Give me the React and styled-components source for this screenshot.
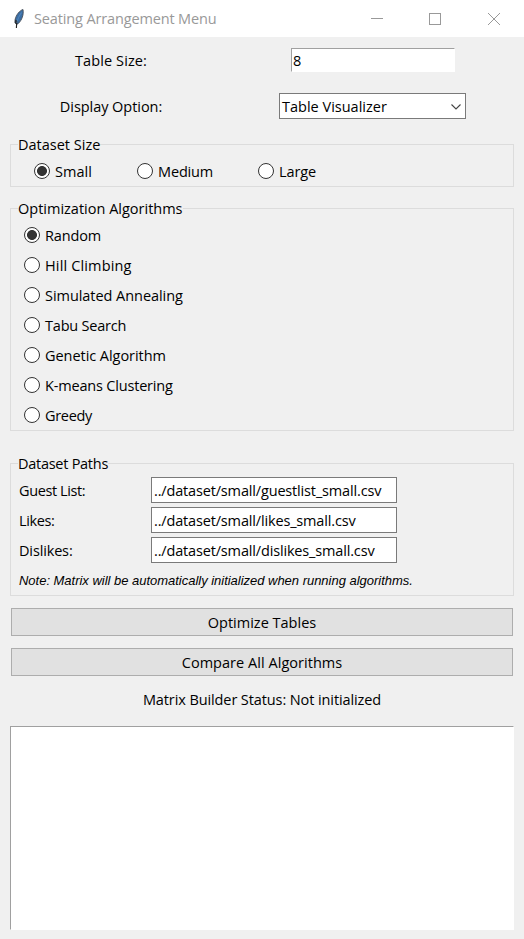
import React, { useState } from "react";
import styled, { createGlobalStyle } from "styled-components";

const GlobalStyle = createGlobalStyle`
  *, *::before, *::after { box-sizing: border-box; }
  body { margin: 0; background: #f0f0f0; }
`;

const Window = styled.main`
  display: flex;
  flex-direction: column;
  width: 524px;
  height: 939px;
  background: #f0f0f0;
  color: #000;
  font: 14.5px/20px "Open Sans", "Noto Sans", sans-serif;
`;

const TitleBar = styled.header`
  display: flex;
  align-items: center;
  flex: none;
  height: 37px;
  padding: 0 23px 0 10px;
  background: #fff;
  color: #999;
`;

const Title = styled.h1`
  flex: 1;
  margin: 0 0 0 6px;
  font: inherit;
  letter-spacing: -0.14px;
`;

const WindowControls = styled.div`
  display: grid;
  grid-template-columns: 58px 59px 14px;
`;

const ControlButton = styled.button`
  display: flex;
  padding: 0;
  border: 0;
  background: none;
  color: #999;
`;

const Text = styled.span`
  white-space: pre;
  letter-spacing: ${(p) => p.$track || 0}px;
`;

const FieldLabel = styled(Text)`
  padding-top: 2px;
`;

const Form = styled.div`
  display: flex;
  flex-direction: column;
  flex: 1;
  padding: 10px 10px 9px;
`;

const FieldRow = styled.div`
  display: grid;
  grid-template-columns: 222px 301px;
  align-items: center;
  justify-items: center;
  height: 26px;
  margin: 0 -10px ${(p) => p.$after}px;
`;

const SunkenInput = styled.input`
  width: 164px;
  height: 24px;
  margin-left: 1px;
  padding: 0 1px;
  border: 1px solid #fff;
  border-top-color: #a0a0a0;
  border-left-color: #a0a0a0;
  outline: 0;
  background: #fff;
  font: inherit;
`;

const Combobox = styled.button`
  display: flex;
  align-items: center;
  justify-content: space-between;
  width: 187px;
  height: 26px;
  padding: 1px 4px 0 2px;
  border: 1px solid #7a7a7a;
  background: #fff;
  color: #000;
  font: inherit;
`;

const Group = styled.section`
  height: ${(p) => p.$height}px;
  margin-bottom: ${(p) => p.$after}px;
  padding: 0 8px;
  border: 1px solid #dcdcdc;
`;

const Legend = styled.h2`
  width: fit-content;
  height: 20px;
  margin: -10px 0 0 -1px;
  font: inherit;
  background: #f0f0f0;
  letter-spacing: ${(p) => p.$track || 0}px;
`;

const RadioRow = styled.div`
  display: flex;
  gap: 45px;
  padding: 7px 0 0 15px;
`;

const RadioColumn = styled.div`
  display: flex;
  flex-direction: column;
  gap: 10px;
  padding: 7px 0 0 5px;
`;

const RadioLabel = styled.label`
  display: flex;
  align-items: center;
  gap: 5px;
  height: 20px;
  width: ${(p) => (p.$width ? `${p.$width}px` : "auto")};
`;

const RadioInput = styled.input`
  appearance: none;
  flex: none;
  width: 16px;
  height: 16px;
  margin: 0 0 2px;
  border: 1px solid #333;
  border-radius: 50%;
  background: #fff;
  &:checked {
    background: radial-gradient(circle, #333 4.6px, #fff 5.3px);
  }
`;

const PathGrid = styled.div`
  display: grid;
  grid-template-columns: 132px 246px;
  grid-auto-rows: 26px;
  row-gap: 4px;
  align-items: center;
  padding-top: 3px;
`;

const PathInput = styled.input`
  width: 246px;
  height: 26px;
  padding: 1px 2px 0;
  border: 1px solid #7a7a7a;
  outline: 0;
  background: #fff;
  font: inherit;
  letter-spacing: -0.16px;
`;

const Note = styled.p`
  margin: 9px 0 0;
  font: italic 13px/18px "Liberation Sans", Arial, sans-serif;
  letter-spacing: -0.02px;
  white-space: nowrap;
`;

const ActionButton = styled.button`
  height: 28px;
  margin: 0 1px 12px;
  padding: 1px 0 0;
  border: 1px solid #adadad;
  background: #e1e1e1;
  color: #000;
  font: inherit;
  letter-spacing: ${(p) => p.$track || 0}px;
`;

const Status = styled.p`
  margin: 2px 0 16px;
  text-align: center;
  letter-spacing: -0.1px;
`;

const Output = styled.textarea`
  flex: 1;
  width: 504px;
  border: 1px solid #fff;
  border-top-color: #a0a0a0;
  border-left-color: #a0a0a0;
  outline: 0;
  resize: none;
  background: #fff;
`;

const SIZES = [
  { name: "Small", width: 58, track: 0.05 },
  { name: "Medium", width: 76, track: -0.15 },
  { name: "Large", width: 60, track: -0.1 },
];

const ALGORITHMS = [
  { name: "Random", track: -0.15 },
  { name: "Hill Climbing", track: 0.15 },
  { name: "Simulated Annealing", track: -0.05 },
  { name: "Tabu Search", track: -0.2 },
  { name: "Genetic Algorithm", track: -0.05 },
  { name: "K-means Clustering", track: -0.18 },
  { name: "Greedy", track: -0.3 },
];

const PATHS = [
  { label: "Guest List:", file: "guestlist", track: -0.4 },
  { label: "Likes:", file: "likes", track: -0.4 },
  { label: "Dislikes:", file: "dislikes", track: -0.15 },
];

function FeatherIcon() {
  return (
    <svg width="18" height="22" viewBox="0 0 18 22">
      <path d="M13 1.500C9.500 2.500 6 7.200 5.100 11.500L4.900 14.500l1.600 2 1.900-1.100C11.800 12.200 14 6.500 13 1.500Z" fill="#3a6ea5" stroke="#4a4f57" strokeWidth=".9" />
      <path d="M5.300 11.500 5 14.800 6.600 16.200 8 13.500Z" fill="#26292e" />
      <path d="M11.500 4.500C9.500 7.500 7.500 11 6.900 15" fill="none" stroke="#5c8fc4" strokeWidth=".8" />
      <path d="M6.700 15 6.400 20" stroke="#222" strokeWidth="1.100" />
    </svg>
  );
}

function Radio({ group, item, checked, onSelect }) {
  return (
    <RadioLabel $width={item.width}>
      <RadioInput type="radio" name={group} checked={checked} onChange={() => onSelect(item.name)} />
      <Text $track={item.track}>{item.name}</Text>
    </RadioLabel>
  );
}

export default function App() {
  const [size, setSize] = useState("Small");
  const [algorithm, setAlgorithm] = useState("Random");
  const folder = size.toLowerCase();

  return (
    <Window>
      <GlobalStyle />
      <TitleBar>
        <FeatherIcon />
        <Title>Seating Arrangement Menu</Title>
        <WindowControls>
          <ControlButton aria-label="Minimize">
            <svg width="14" height="14" stroke="currentColor"><path d="M1 6.500H13" /></svg>
          </ControlButton>
          <ControlButton aria-label="Maximize">
            <svg width="14" height="14" stroke="currentColor" fill="none"><rect x="1.500" y="1.500" width="11" height="11" /></svg>
          </ControlButton>
          <ControlButton aria-label="Close">
            <svg width="14" height="14" stroke="currentColor"><path d="M1 1 13 13M13 1 1 13" /></svg>
          </ControlButton>
        </WindowControls>
      </TitleBar>
      <Form>
        <FieldRow $after={20}>
          <FieldLabel $track={0.1}>Table Size:</FieldLabel>
          <SunkenInput aria-label="Table Size" defaultValue="8" />
        </FieldRow>
        <FieldRow $after={25}>
          <FieldLabel $track={-0.05}>Display Option:</FieldLabel>
          <Combobox>
            <Text>Table Visualizer</Text>
            <svg width="10" height="6" fill="none" stroke="#444" strokeWidth="1.100"><path d="M.5.500 5 5 9.500.5" /></svg>
          </Combobox>
        </FieldRow>
        <Group $height={43} $after={21}>
          <Legend>Dataset Size</Legend>
          <RadioRow>
            {SIZES.map((item) => (
              <Radio key={item.name} group="size" item={item} checked={size === item.name} onSelect={setSize} />
            ))}
          </RadioRow>
        </Group>
        <Group $height={223} $after={32}>
          <Legend>Optimization Algorithms</Legend>
          <RadioColumn>
            {ALGORITHMS.map((item) => (
              <Radio key={item.name} group="algorithm" item={item} checked={algorithm === item.name} onSelect={setAlgorithm} />
            ))}
          </RadioColumn>
        </Group>
        <Group $height={133} $after={12}>
          <Legend $track={-0.27}>Dataset Paths</Legend>
          <PathGrid>
            {PATHS.map(({ label, file, track }) => (
              <React.Fragment key={label}>
                <FieldLabel $track={track}>{label}</FieldLabel>
                <PathInput aria-label={label} readOnly value={`../dataset/${folder}/${file}_${folder}.csv`} />
              </React.Fragment>
            ))}
          </PathGrid>
          <Note>Note: Matrix will be automatically initialized when running algorithms.</Note>
        </Group>
        <ActionButton>Optimize Tables</ActionButton>
        <ActionButton $track={0.04}>Compare All Algorithms</ActionButton>
        <Status>Matrix Builder Status: Not initialized</Status>
        <Output aria-label="Output" />
      </Form>
    </Window>
  );
}
